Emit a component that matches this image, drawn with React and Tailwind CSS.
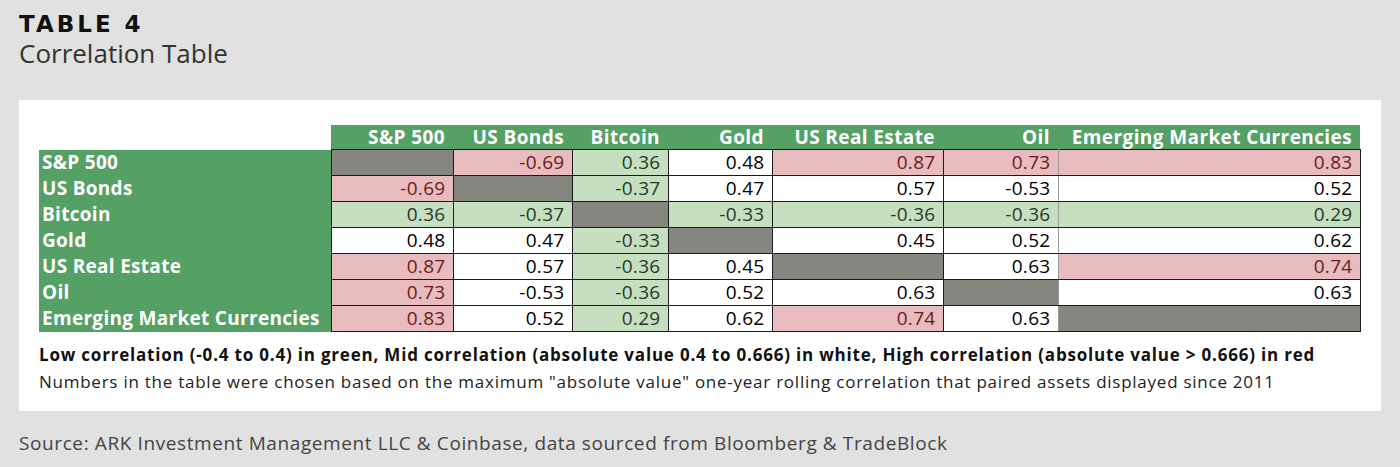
const ASSETS = ['S&P 500', 'US Bonds', 'Bitcoin', 'Gold', 'US Real Estate', 'Oil', 'Emerging Market Currencies']

const MATRIX = [
  [null, '-0.69', '0.36', '0.48', '0.87', '0.73', '0.83'],
  ['-0.69', null, '-0.37', '0.47', '0.57', '-0.53', '0.52'],
  ['0.36', '-0.37', null, '-0.33', '-0.36', '-0.36', '0.29'],
  ['0.48', '0.47', '-0.33', null, '0.45', '0.52', '0.62'],
  ['0.87', '0.57', '-0.36', '0.45', null, '0.63', '0.74'],
  ['0.73', '-0.53', '-0.36', '0.52', '0.63', null, '0.63'],
  ['0.83', '0.52', '0.29', '0.62', '0.74', '0.63', null],
]

const COL_W = ['w-[292px]', 'w-[122px]', 'w-[119px]', 'w-[96px]', 'w-[104px]', 'w-[171px]', 'w-[115px]', 'w-[302px]']

// low = green, mid = white, high = red, diagonal = grey
function cellClass(v) {
  if (v === null) return 'bg-[#868681]'
  const a = Math.abs(parseFloat(v))
  if (a < 0.4) return 'bg-[#c6dfc1] text-[#243a26]'
  if (a <= 0.666) return 'bg-white text-black'
  return 'bg-[#e8bcbe] text-[#6a1b1d]'
}

export default function App() {
  return (
    <div className="w-[1400px] h-[467px] bg-[#e1e1e1] px-[19px] pt-[11px]" style={{ fontFamily: '"Open Sans", "Liberation Sans", sans-serif' }}>
      <p className="text-[23px] leading-[26px] font-bold text-[#111] tracking-[3px]" style={{ fontFamily: '"DejaVu Sans", sans-serif' }}>TABLE 4</p>
      <p className="text-[26px] leading-[32px] text-[#333]">Correlation Table</p>

      <div className="bg-white w-[1362px] h-[311px] mt-[31px] pl-[20px] pt-[25px]">
        <table className="table-fixed border-collapse">
          <colgroup>
            {COL_W.map((w, i) => <col key={i} className={w} />)}
          </colgroup>
          <thead>
            <tr className="h-[24px]">
              <th className="bg-white p-0" />
              {ASSETS.map(a => (
                <th key={a} className="bg-[#55a065] text-white text-[19px] leading-[24px] font-bold tracking-[0.4px] text-right pr-[8px] p-0 whitespace-nowrap">
                  {a}
                </th>
              ))}
            </tr>
          </thead>
          <tbody>
            {MATRIX.map((row, r) => (
              <tr key={r} className="h-[26px]">
                <td className="bg-[#55a065] text-white text-[19px] leading-[25px] font-bold tracking-[0.3px] text-left pl-[3px] p-0 whitespace-nowrap">
                  {ASSETS[r]}
                </td>
                {row.map((v, c) => (
                  <td key={c}
                    className={`${cellClass(v)} border border-[#1a1a1a] ${c === 5 ? 'border-r-[#9a9a9a]' : ''} text-[19px] leading-[25px] tracking-[0.3px] text-right pr-[7px] p-0`}>
                    {v}
                  </td>
                ))}
              </tr>
            ))}
          </tbody>
        </table>

        <p className="mt-[12px] text-[17px] leading-[22px] font-bold tracking-[0.8px] text-[#111] whitespace-nowrap">
          Low correlation (-0.4 to 0.4) in green, Mid correlation (absolute value 0.4 to 0.666) in white, High correlation (absolute value &gt; 0.666) in red
        </p>
        <p className="mt-[5px] text-[17px] leading-[22px] tracking-[0.75px] text-[#222] whitespace-nowrap">
          Numbers in the table were chosen based on the maximum "absolute value" one-year rolling correlation that paired assets displayed since 2011
        </p>
      </div>

      <p className="mt-[20px] text-[19px] leading-[24px] tracking-[0.6px] text-[#444]">
        Source: ARK Investment Management LLC &amp; Coinbase, data sourced from Bloomberg &amp; TradeBlock
      </p>
    </div>
  )
}
